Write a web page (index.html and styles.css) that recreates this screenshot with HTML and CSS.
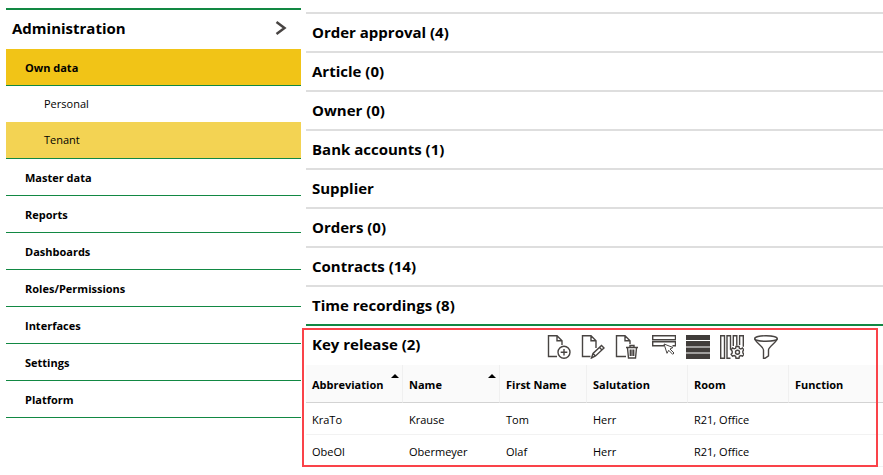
FILE: index.html
```html
<!DOCTYPE html>
<html lang="en">
<head>
<meta charset="utf-8">
<title>Administration</title>
<link rel="stylesheet" href="styles.css">
</head>
<body>
<div class="layout">
  <nav class="sidebar" aria-label="Administration">
    <button class="sidebar-head" type="button">
      <span>Administration</span>
      <svg class="chevron" viewBox="0 0 12 14" aria-hidden="true"><path d="M1.500 1 9.500 7 1.500 13"/></svg>
    </button>
    <ul class="menu">
      <li class="menu-group"><a class="menu-link active" href="#">Own data</a>
        <ul class="submenu">
          <li><a class="sub-link" href="#">Personal</a></li>
          <li><a class="sub-link current" href="#">Tenant</a></li>
        </ul>
      </li>
      <li><a class="menu-link" href="#">Master data</a></li>
      <li><a class="menu-link" href="#">Reports</a></li>
      <li><a class="menu-link" href="#">Dashboards</a></li>
      <li><a class="menu-link" href="#">Roles/Permissions</a></li>
      <li><a class="menu-link" href="#">Interfaces</a></li>
      <li><a class="menu-link" href="#">Settings</a></li>
      <li><a class="menu-link" href="#">Platform</a></li>
    </ul>
  </nav>
  <main class="content">
    <button class="section" type="button">Order approval (4)</button>
    <button class="section" type="button">Article (0)</button>
    <button class="section" type="button">Owner (0)</button>
    <button class="section" type="button">Bank accounts (1)</button>
    <button class="section" type="button">Supplier</button>
    <button class="section" type="button">Orders (0)</button>
    <button class="section" type="button">Contracts (14)</button>
    <button class="section" type="button">Time recordings (8)</button>
    <section class="panel">
      <header class="panel-head">
        <h2 class="panel-title">Key release (2)</h2>
        <div class="toolbar">
          <button class="tool" type="button" aria-label="New">
            <svg viewBox="0 0 24 24"><path d="M10 21.500H1.500V.7H10l5 5V10M10 .7v5h5"/><circle cx="17" cy="17.300" r="6"/><path d="M17 14v6.600M13.700 17.300h6.600"/></svg>
          </button>
          <button class="tool" type="button" aria-label="Edit">
            <svg viewBox="0 0 24 24"><path d="M9.500 21.500H1.500V.7H10l5 5V13M10 .7v5h5M10.500 23l1.500-4.500 8.500-8 2.500 2.500-8.500 8zM12 18.500l2.500 2.500M18.500 12.500l2.500 2.500"/></svg>
          </button>
          <button class="tool" type="button" aria-label="Delete">
            <svg viewBox="0 0 24 24"><path d="M11 21.500H1.500V.7H10l5 5V9M10 .7v5h5M11 12.500h12M15 12.500v-2h4v2M12.500 13l1 10h7l1-10M15.300 14.500v6.500M17 14.500v6.500M18.700 14.500v6.500"/></svg>
          </button>
          <button class="tool tool-select" type="button" aria-label="Select">
            <svg viewBox="0 0 24 24"><path d="M.7.7h22.800v4H.7zM12 10.700H.7v-4h22.800v4h-3"/><path class="thin" d="M12 9l9 3.500-3 1.500 4 4-1.300 1.300-4-4-1.700 3z"/></svg>
          </button>
          <button class="tool" type="button" aria-label="Rows">
            <svg viewBox="0 0 24 24"><path class="solid" d="M0 0h24v5H0zM0 6h24v5.500H0zM0 12.500h24v5H0zM0 18.500h24V24H0z"/></svg>
          </button>
          <button class="tool" type="button" aria-label="Columns">
            <svg viewBox="0 0 24 24"><path d="M.7.7h3.800v22.600H.7zM10.500 23.300H7V.7h3.500v14M13.300 11V.7h3.500v10M19.600 10V.7h3.700v11"/><path d="m16 11.500 3 0 .4 1.800 1.500.7 1.500-1 1.400 1.800-1 1.500.1 1.700 1 1.300-1.400 1.900-1.600-.7-1.500.8-.4 1.900h-3l-.4-1.900-1.500-.8-1.600.7-1.400-2 1.100-1.300v-1.700l-1.100-1.400 1.500-1.800 1.500.8 1.500-.5z"/><circle cx="17.500" cy="17.300" r="2"/></svg>
          </button>
          <button class="tool" type="button" aria-label="Filter">
            <svg viewBox="0 0 24 24"><ellipse cx="12" cy="3.500" rx="11.300" ry="2.800"/><path d="M.7 3.500C.7 7 9.500 11.500 9.500 15v8.300h1.500l3.500-2.500V15C14.500 11.500 23.300 7 23.300 3.500"/></svg>
          </button>
        </div>
      </header>
      <table class="grid">
        <colgroup><col class="c-abbr"><col class="c-name"><col class="c-first"><col class="c-sal"><col class="c-room"><col></colgroup>
        <thead>
          <tr><th class="sorted">Abbreviation</th><th class="sorted">Name</th><th>First Name</th><th>Salutation</th><th>Room</th><th>Function</th></tr>
        </thead>
        <tbody>
          <tr><td>KraTo</td><td>Krause</td><td>Tom</td><td>Herr</td><td>R21, Office</td><td></td></tr>
          <tr><td>ObeOl</td><td>Obermeyer</td><td>Olaf</td><td>Herr</td><td>R21, Office</td><td></td></tr>
        </tbody>
      </table>
      <div class="highlight"></div>
    </section>
  </main>
</div>
</body>
</html>
```
FILE: styles.css
```css
* { box-sizing: border-box; }
body {
  margin: 0;
  background: #fff;
  color: #000;
  font-family: "Open Sans", "Noto Sans", sans-serif;
  font-size: 11px;
}
button {
  border: 0;
  padding: 0;
  background: none;
  color: inherit;
  font-family: inherit;
  text-align: left;
  cursor: pointer;
}
a { color: inherit; text-decoration: none; }
ul { list-style: none; margin: 0; padding: 0; }

.layout { display: flex; gap: 5px; padding-left: 6px; }

.sidebar { flex: 0 0 295px; padding-top: 8px; }
.sidebar-head {
  display: flex;
  align-items: center;
  justify-content: space-between;
  width: 100%;
  height: 41px;
  padding: 0 14px 3px 6px;
  border-top: 2px solid #128843;
  font-size: 15px;
  font-weight: 700;
}
.chevron {
  width: 12px;
  height: 14px;
  fill: none;
  stroke: #484442;
  stroke-width: 2.5;
}
.menu-link, .sub-link { display: block; }
.menu-link {
  padding: 2px 0 0 19px;
  border-bottom: 1px solid #128843;
  line-height: 34px;
  font-weight: 700;
}
.menu-link.active { background: #f1c417; }
.submenu { border-bottom: 1px solid #128843; }
.sub-link { padding-left: 38px; line-height: 36px; }
.sub-link.current { background: #f3d353; }

.content { flex: 1; min-width: 0; padding-top: 12px; }
.section {
  display: block;
  width: 100%;
  height: 39px;
  padding: 0 0 2px 6px;
  border-top: 2px solid #dedede;
  font-size: 15px;
  font-weight: 700;
}
.panel { position: relative; border-top: 2px solid #128843; }
.panel-head { display: flex; align-items: center; height: 39px; padding-left: 6px; }
.panel-title { flex: 0 0 235px; margin: 0; padding-bottom: 3px; font-size: 15px; font-weight: 700; }
.toolbar { display: flex; gap: 10px; padding-top: 2px; }
.tool { width: 24px; height: 24px; }
.tool-select { margin-left: 3px; }
.tool svg {
  display: block;
  width: 24px;
  height: 24px;
  fill: none;
  stroke: #484442;
  stroke-width: 1.4;
}
.tool .solid { fill: #403c3a; stroke: none; }
.tool .thin { fill: #fff; stroke-width: 1; }

.grid { width: 100%; table-layout: fixed; border-collapse: separate; border-spacing: 0; }
.c-abbr, .c-name { width: 97px; }
.c-first { width: 87px; }
.c-sal, .c-room { width: 101px; }
.grid th, .grid td { padding: 2px 0 0 6px; text-align: left; white-space: nowrap; }
.grid th {
  position: relative;
  height: 38px;
  background: #fafafa;
  border-right: 1px solid #f0f0f0;
  border-bottom: 1px solid #d3d3d3;
  font-weight: 700;
}
.grid td { height: 32px; border-bottom: 1px solid #f2f2f2; }
.grid th:last-child { border-right: 0; }
.sorted::after {
  content: "";
  position: absolute;
  top: 9px;
  right: 3px;
  border: 4px solid transparent;
  border-top: 0;
  border-bottom-color: #000;
}
.highlight {
  position: absolute;
  inset: 2px 5px 0 -4px;
  border: 2px solid #fa4349;
  pointer-events: none;
}
```
